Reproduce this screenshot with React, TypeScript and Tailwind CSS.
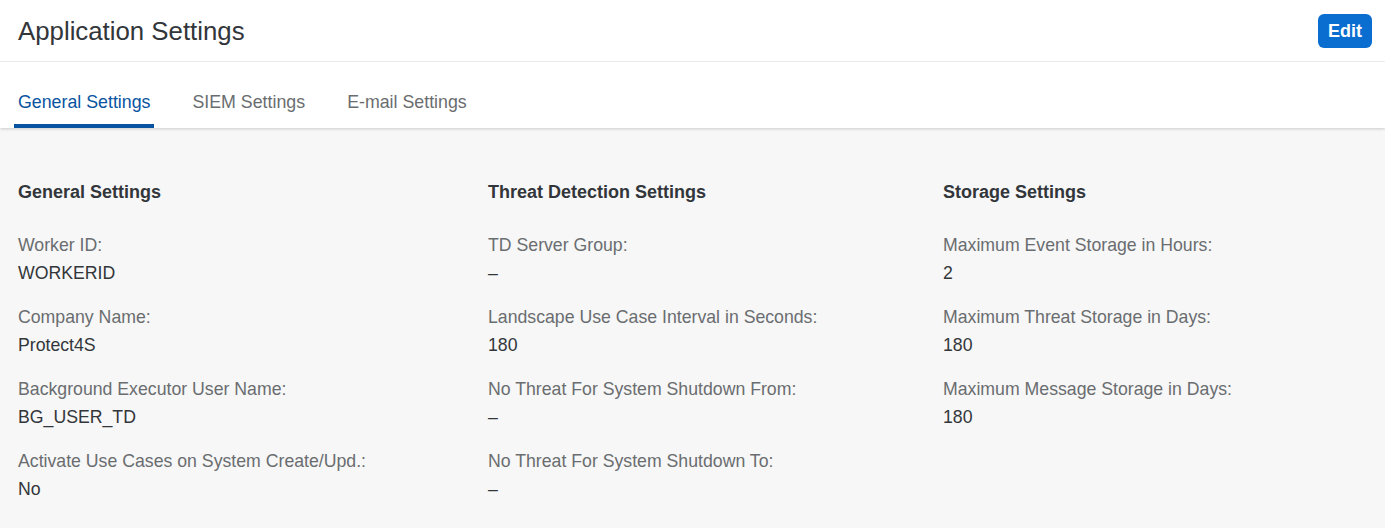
const general = [
  { label: "Worker ID:", value: "WORKERID" },
  { label: "Company Name:", value: "Protect4S" },
  { label: "Background Executor User Name:", value: "BG_USER_TD" },
  { label: "Activate Use Cases on System Create/Upd.:", value: "No" },
];

const threat = [
  { label: "TD Server Group:", value: "–" },
  { label: "Landscape Use Case Interval in Seconds:", value: "180" },
  { label: "No Threat For System Shutdown From:", value: "–" },
  { label: "No Threat For System Shutdown To:", value: "–" },
];

const storage = [
  { label: "Maximum Event Storage in Hours:", value: "2" },
  { label: "Maximum Threat Storage in Days:", value: "180" },
  { label: "Maximum Message Storage in Days:", value: "180" },
];

function Section({ title, fields }: { title: string; fields: { label: string; value: string }[] }) {
  return (
    <div>
      <h3 className="text-[18px] font-bold text-[#32363a] leading-[24px]">{title}</h3>
      <div className="mt-[27px] flex flex-col gap-[16px]">
        {fields.map((f) => (
          <div key={f.label}>
            <div className="text-[17.7px] leading-[28px] text-[#6a6d70]">{f.label}</div>
            <div className="text-[17.7px] leading-[28px] text-[#32363a]">{f.value}</div>
          </div>
        ))}
      </div>
    </div>
  );
}

export default function App() {
  return (
    <div className="w-[1385px] h-[528px] bg-[#f7f7f7] overflow-hidden" style={{ fontFamily: '"Liberation Sans", Arial, sans-serif' }}>
      {/* Header */}
      <div className="bg-white">
        <div className="h-[62px] flex items-center justify-between pl-[18px] pr-[13px] border-b border-[#f2f2f2]">
          <h1 className="text-[25.8px] text-[#32363a] pt-[1px]">Application Settings</h1>
          <button className="h-[34px] px-[10px] rounded-[6px] bg-[#0a6ed1] text-white text-[18px] font-bold leading-none">Edit</button>
        </div>
        {/* Tabs */}
        <div className="h-[66px] flex items-end gap-[34px] px-[14px] shadow-[0_1px_3px_rgba(0,0,0,0.18)] relative">
          <div className="h-full flex flex-col justify-end px-[4px] border-b-[4px] border-[#0854a0] pb-[8px]">
            <span className="text-[17.8px] text-[#0854a0]">General Settings</span>
          </div>
          <div className="h-full flex flex-col justify-end px-[4px] pb-[12px]">
            <span className="text-[17.8px] text-[#6a6d70]">SIEM Settings</span>
          </div>
          <div className="h-full flex flex-col justify-end px-[4px] pb-[12px]">
            <span className="text-[17.8px] text-[#6a6d70]">E-mail Settings</span>
          </div>
        </div>
      </div>

      {/* Content */}
      <div className="grid grid-cols-[470px_455px_1fr] pl-[18px] pt-[52px]">
        <Section title="General Settings" fields={general} />
        <Section title="Threat Detection Settings" fields={threat} />
        <Section title="Storage Settings" fields={storage} />
      </div>
    </div>
  );
}
